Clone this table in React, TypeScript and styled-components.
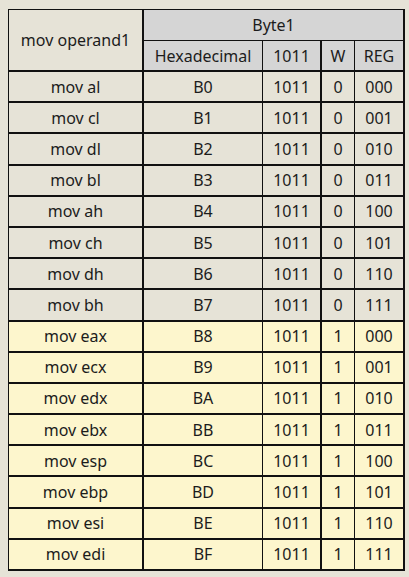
import styled, { createGlobalStyle } from 'styled-components';

type Tone = 'plain' | 'yellow';

interface MovRow {
  op: string;
  hex: string;
  w: string;
  reg: string;
  tone: Tone;
}

const rows: MovRow[] = [
  { op: 'mov al', hex: 'B0', w: '0', reg: '000', tone: 'plain' },
  { op: 'mov cl', hex: 'B1', w: '0', reg: '001', tone: 'plain' },
  { op: 'mov dl', hex: 'B2', w: '0', reg: '010', tone: 'plain' },
  { op: 'mov bl', hex: 'B3', w: '0', reg: '011', tone: 'plain' },
  { op: 'mov ah', hex: 'B4', w: '0', reg: '100', tone: 'plain' },
  { op: 'mov ch', hex: 'B5', w: '0', reg: '101', tone: 'plain' },
  { op: 'mov dh', hex: 'B6', w: '0', reg: '110', tone: 'plain' },
  { op: 'mov bh', hex: 'B7', w: '0', reg: '111', tone: 'plain' },
  { op: 'mov eax', hex: 'B8', w: '1', reg: '000', tone: 'yellow' },
  { op: 'mov ecx', hex: 'B9', w: '1', reg: '001', tone: 'yellow' },
  { op: 'mov edx', hex: 'BA', w: '1', reg: '010', tone: 'yellow' },
  { op: 'mov ebx', hex: 'BB', w: '1', reg: '011', tone: 'yellow' },
  { op: 'mov esp', hex: 'BC', w: '1', reg: '100', tone: 'yellow' },
  { op: 'mov ebp', hex: 'BD', w: '1', reg: '101', tone: 'yellow' },
  { op: 'mov esi', hex: 'BE', w: '1', reg: '110', tone: 'yellow' },
  { op: 'mov edi', hex: 'BF', w: '1', reg: '111', tone: 'yellow' },
];

// column widths include each cell's right border
const columns = [135, 119, 59, 33, 50];
const rightEdges = [2, 1, 2, 1, 2];

export default function App() {
  return (
    <>
      <GlobalStyle />
      <Page>
        <Table>
          <colgroup>
            {columns.map((w, i) => (
              <Col key={i} $w={w} />
            ))}
          </colgroup>
          <thead>
            <HeadRow>
              <HeadCell rowSpan={2} $edge={2} $bottom={2} $tone="plain">
                mov operand1
              </HeadCell>
              <HeadCell colSpan={4} $edge={2} $bottom={1} $tone="gray">
                Byte1
              </HeadCell>
            </HeadRow>
            <HeadRow>
              <HeadCell $edge={1} $bottom={2} $tone="gray">
                Hexadecimal
              </HeadCell>
              <HeadCell $edge={2} $bottom={2} $tone="gray">
                1011
              </HeadCell>
              <HeadCell $edge={1} $bottom={2} $tone="gray">
                W
              </HeadCell>
              <HeadCell $edge={2} $bottom={2} $tone="gray">
                REG
              </HeadCell>
            </HeadRow>
          </thead>
          <tbody>
            {rows.map(row => (
              <DataRow key={row.op}>
                {[row.op, row.hex, '1011', row.w, row.reg].map((text, i) => (
                  <Cell key={i} $edge={rightEdges[i]} $tone={row.tone}>
                    {text}
                  </Cell>
                ))}
              </DataRow>
            ))}
          </tbody>
        </Table>
      </Page>
    </>
  );
}

const GlobalStyle = createGlobalStyle`
  html, body {
    margin: 0;
    padding: 0;
    background: #e6e3d7;
  }
  body {
    font-family: "Noto Sans", "Noto Sans CJK KR", sans-serif;
    color: #1c1c1c;
  }
`;

const Page = styled.div`
  padding: 9px 0 0 8px;
  width: 409px;
  height: 577px;
  box-sizing: border-box;
`;

const Table = styled.table`
  border-collapse: separate;
  border-spacing: 0;
  table-layout: fixed;
  width: 397px;
  border-top: 1px solid #111;
  border-left: 1px solid #111;
`;

const Col = styled.col<{ $w: number }>`
  width: ${({ $w }) => $w}px;
`;

const toneColor = {
  plain: '#e6e3d7',
  gray: '#d5d5d5',
  yellow: '#fdf6cd',
};

const HeadRow = styled.tr`
  height: 31px;
`;

const DataRow = styled.tr`
  height: 31.2px;
`;

const HeadCell = styled.th<{
  $edge: number;
  $bottom: number;
  $tone: keyof typeof toneColor;
}>`
  box-sizing: border-box;
  padding: 0 2px;
  font-weight: 400;
  font-size: 16px;
  line-height: 20px;
  text-align: center;
  white-space: nowrap;
  background: ${({ $tone }) => toneColor[$tone]};
  border-right: ${({ $edge }) => $edge}px solid #111;
  border-bottom: ${({ $bottom }) => $bottom}px solid #111;
`;

const Cell = styled.td<{ $edge: number; $tone: Tone }>`
  box-sizing: border-box;
  padding: 0 2px;
  font-size: 16px;
  line-height: 20px;
  text-align: center;
  white-space: nowrap;
  background: ${({ $tone }) => toneColor[$tone]};
  border-right: ${({ $edge }) => $edge}px solid #111;
  border-bottom: 2px solid #111;
`;
